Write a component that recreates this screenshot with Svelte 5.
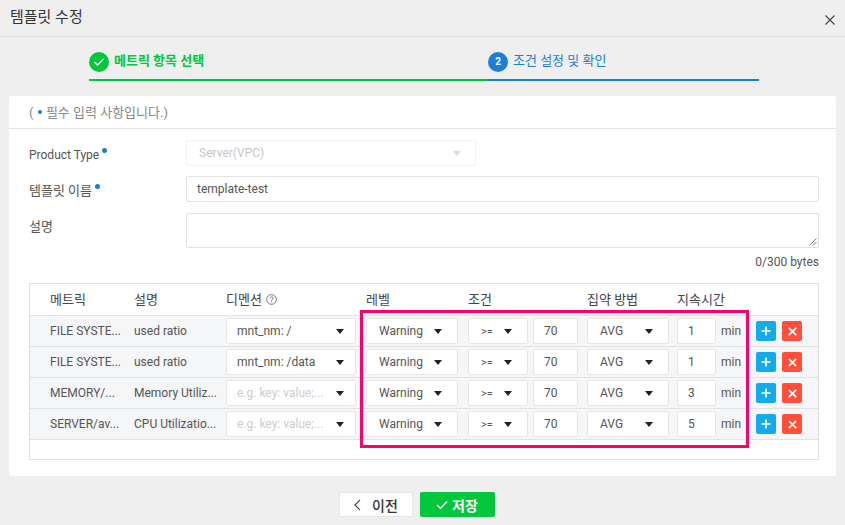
<script>
  const rows = [
    { metric: "FILE SYSTE...", desc: "used ratio", dim: "mnt_nm: /", time: 1 },
    { metric: "FILE SYSTE...", desc: "used ratio", dim: "mnt_nm: /data", time: 1 },
    { metric: "MEMORY/...", desc: "Memory Utiliz...", dim: "", time: 3 },
    { metric: "SERVER/av...", desc: "CPU Utilizatio...", dim: "", time: 5 }
  ];
</script>

{#snippet arrow()}
  <svg class="arrow" width="8" height="5" viewBox="0 0 8 5"><path d="M0 0h8L4 5z" /></svg>
{/snippet}

<div class="page">
  <header class="top">
    <h1>템플릿 수정</h1>
    <svg class="close" width="10" height="10" viewBox="0 0 10 10"><path d="M.5.5l9 9M9.500.5l-9 9" /></svg>
  </header>

  <div class="steps">
    <div class="step done">
      <span class="dot"><svg width="12" height="10" viewBox="0 0 12 10"><path d="M1.500 5l3 3 6-6" /></svg></span>
      <b>메트릭 항목 선택</b>
    </div>
    <div class="step now">
      <span class="dot">2</span>
      <span class="now-label">조건 설정 및 확인</span>
    </div>
  </div>

  <main class="card">
    <p class="note">( <i class="req"></i> 필수 입력 사항입니다.)</p>
    <div class="form">
      <div class="field">
        <span class="label">Product Type<i class="req up"></i></span>
        <div class="box disabled"><span>Server(VPC)</span>{@render arrow()}</div>
      </div>
      <div class="field">
        <span class="label ko">템플릿 이름<i class="req up"></i></span>
        <div class="box wide">template-test</div>
      </div>
      <div class="field">
        <span class="label ko">설명</span>
        <div class="box wide area">
          <svg class="grip" width="8" height="8" viewBox="0 0 8 8"><path d="M7.500.5l-7 7M7.500 4l-3.500 3.500" /></svg>
        </div>
      </div>
      <p class="count">0/300 bytes</p>
    </div>

    <div class="table">
      <div class="tr head">
        <span>메트릭</span>
        <span>설명</span>
        <span class="help">디멘션
          <svg width="11" height="11" viewBox="0 0 10 10"><circle cx="5" cy="5" r="4.400" /><path d="M3.600 4c0-1.900 2.900-1.900 2.900-.2C6.500 5 5 4.800 5 6.200M5 7v.8" /></svg>
        </span>
        <span>레벨</span>
        <span>조건</span>
        <span></span>
        <span>집약 방법</span>
        <span class="nowrap">지속시간</span>
      </div>
      {#each rows as row}
        <div class="tr">
          <span>{row.metric}</span>
          <span>{row.desc}</span>
          <div class="ctl dim" class:empty={!row.dim}>
            <span>{row.dim || "e.g. key: value;..."}</span>{@render arrow()}
          </div>
          <div class="ctl level"><span>Warning</span>{@render arrow()}</div>
          <div class="ctl cond"><span class="gte">&gt;=</span>{@render arrow()}</div>
          <div class="ctl num">70</div>
          <div class="ctl agg"><span>AVG</span>{@render arrow()}</div>
          <div class="ctl num time">{row.time}</div>
          <span>min</span>
          <div class="actions">
            <span class="act add"><svg width="10" height="10" viewBox="0 0 10 10"><path d="M5 .5v9M.5 5h9" /></svg></span>
            <span class="act del"><svg width="9" height="9" viewBox="0 0 9 9"><path d="M.8.8l7.400 7.400M8.200.8L.8 8.200" /></svg></span>
          </div>
        </div>
      {/each}
      <div class="tail"></div>
      <div class="mark"></div>
    </div>
  </main>

  <footer class="foot">
    <button class="prev">
      <svg width="7" height="12" viewBox="0 0 7 12"><path d="M6 .8L1 6l5 5.200" /></svg>
      이전
    </button>
    <button class="save">
      <svg width="12" height="10" viewBox="0 0 12 10"><path d="M1 5l3.500 3.500L11 1.500" /></svg>
      저장
    </button>
  </footer>
</div>

<style>
  :global(body) { margin: 0; background: #efefef; }
  .page { width: 845px; height: 525px; overflow: hidden; color: #555; font: 12px/1.2 Roboto, "Noto Sans CJK KR", sans-serif; }
  .top { display: flex; align-items: center; justify-content: space-between; box-sizing: border-box; height: 37px; padding: 0 10px; border-bottom: 1px solid #e0e0e0; }
  h1 { margin: -3px 0 0; color: #333; font-size: 15px; font-weight: 400; }
  .close { margin: 3px 0 0; }
  .close path { fill: none; stroke: #444; stroke-width: 1.100; }

  .steps { display: flex; margin: 15px 0 0 89px; width: 670px; height: 29px; }
  .step { display: flex; align-items: flex-start; gap: 5px; box-sizing: border-box; height: 29px; font-size: 13px; }
  .step.done { width: 399px; border-bottom: 2px solid #00c73c; color: #00c73c; }
  .step.now { flex: 1; border-bottom: 2px solid #1a7fd9; color: #1a7fd9; }
  .dot { display: flex; align-items: center; justify-content: center; width: 20px; height: 20px; border-radius: 50%; color: #fff; font-size: 10px; font-weight: 700; }
  .step b, .now-label { line-height: 18px; }
  .step b { font-weight: 700; }
  .now-label { font-weight: 400; }
  .done .dot { background: #00c73c; }
  .now .dot { background: #1a7fd9; }
  .dot path { fill: none; stroke: #fff; stroke-width: 1.300; }

  .card { box-sizing: border-box; width: 827px; height: 380px; margin: 15px 0 0 9px; border-radius: 3px; background: #fff; }
  .note { box-sizing: border-box; height: 33px; margin: 0; padding: 9px 20px 0; border-bottom: 1px solid #e5e5e5; color: #888; font-size: 13px; }
  .req { display: inline-block; width: 4px; height: 4px; margin: 0 1px; border-radius: 50%; background: #1a7fd9; vertical-align: 3px; }
  .req.up { width: 5px; height: 5px; margin-left: 3px; vertical-align: 6px; }

  .form { padding: 11px 17px 0 20px; }
  .field { display: flex; margin-bottom: 10px; }
  .label { flex: 0 0 157px; padding-top: 8px; color: #555; }
  .label.ko { font-size: 13px; padding-top: 7px; }
  .box { box-sizing: border-box; display: flex; align-items: center; height: 26px; border: 1px solid #e2e2e2; border-radius: 2px; font-size: 12px; }
  .wide { flex: 1; padding-left: 10px; }
  .area { position: relative; height: 35px; margin-top: 1px; }
  .grip { position: absolute; right: 1px; bottom: 1px; }
  .grip path { fill: none; stroke: #777; stroke-width: 1; }
  .disabled { justify-content: space-between; width: 290px; padding: 0 14px 0 12px; border-color: #f2f2f2; color: #c6c6c6; }
  .disabled .arrow path { fill: #ddd; }
  .count { margin: -3px 0 0; text-align: right; font-size: 12px; }

  .arrow { flex: none; }
  .arrow path { fill: #222; }

  .table { position: relative; margin: 14px 17px 0 20px; border: 1px solid #e0e0e0; }
  .tr { display: grid; grid-template-columns: 84px 92px 140px 102px 65px 54px 90px 44px 35px auto; align-items: center; box-sizing: border-box; height: 31px; padding-left: 20px; border-bottom: 1px solid #e2e2e2; background: #f5f6f8; white-space: nowrap; }
  .head { height: 32px; background: #fff; color: #444; font-size: 13px; }
  .nowrap { white-space: nowrap; }
  .help svg { margin-left: 1px; vertical-align: -1px; }
  .help circle, .help path { fill: none; stroke: #666; stroke-width: .8; }
  .ctl { box-sizing: border-box; display: flex; align-items: center; justify-content: space-between; height: 26px; border: 1px solid #e6e6e6; border-radius: 2px; background: #fff; }
  .dim { width: 130px; padding: 0 11px 0 10px; }
  .dim.empty { color: #ccc; }
  .level { width: 92px; padding: 0 15px 0 12px; }
  .cond { width: 60px; padding: 0 15px 0 12px; }
  .gte { font-size: 11px; }
  .num { justify-content: flex-start; width: 45px; padding-left: 10px; }
  .time { width: 39px; padding-left: 10px; }
  .agg { width: 82px; padding: 0 15px 0 12px; }
  .actions { display: flex; gap: 6px; }
  .act { display: flex; align-items: center; justify-content: center; width: 20px; height: 20px; border-radius: 2px; }
  .act path { fill: none; stroke: #fff; stroke-width: 1.700; }
  .add { background: #14abeb; }
  .del { background: #ff4f3b; }
  .tail { height: 19px; }
  .mark { position: absolute; left: 330px; top: 26px; box-sizing: border-box; width: 389px; height: 138px; border: 3px solid #ff0066; }

  .foot { display: flex; justify-content: center; gap: 7px; margin: 16px 12px 0 0; }
  button { display: flex; align-items: center; justify-content: center; box-sizing: border-box; height: 25px; border-radius: 2px; font: 700 14px Roboto, "Noto Sans CJK KR", sans-serif; }
  .prev { gap: 11px; width: 74px; padding-left: 7px; border: 1px solid #e6e6e6; background: #fff; color: #333; font-weight: 500; }
  .prev path { fill: none; stroke: #345; stroke-width: 1.100; }
  .save { gap: 4px; width: 75px; border: 0; background: #00c73c; color: #fff; }
  .save path { fill: none; stroke: #fff; stroke-width: 1.500; }
</style>
